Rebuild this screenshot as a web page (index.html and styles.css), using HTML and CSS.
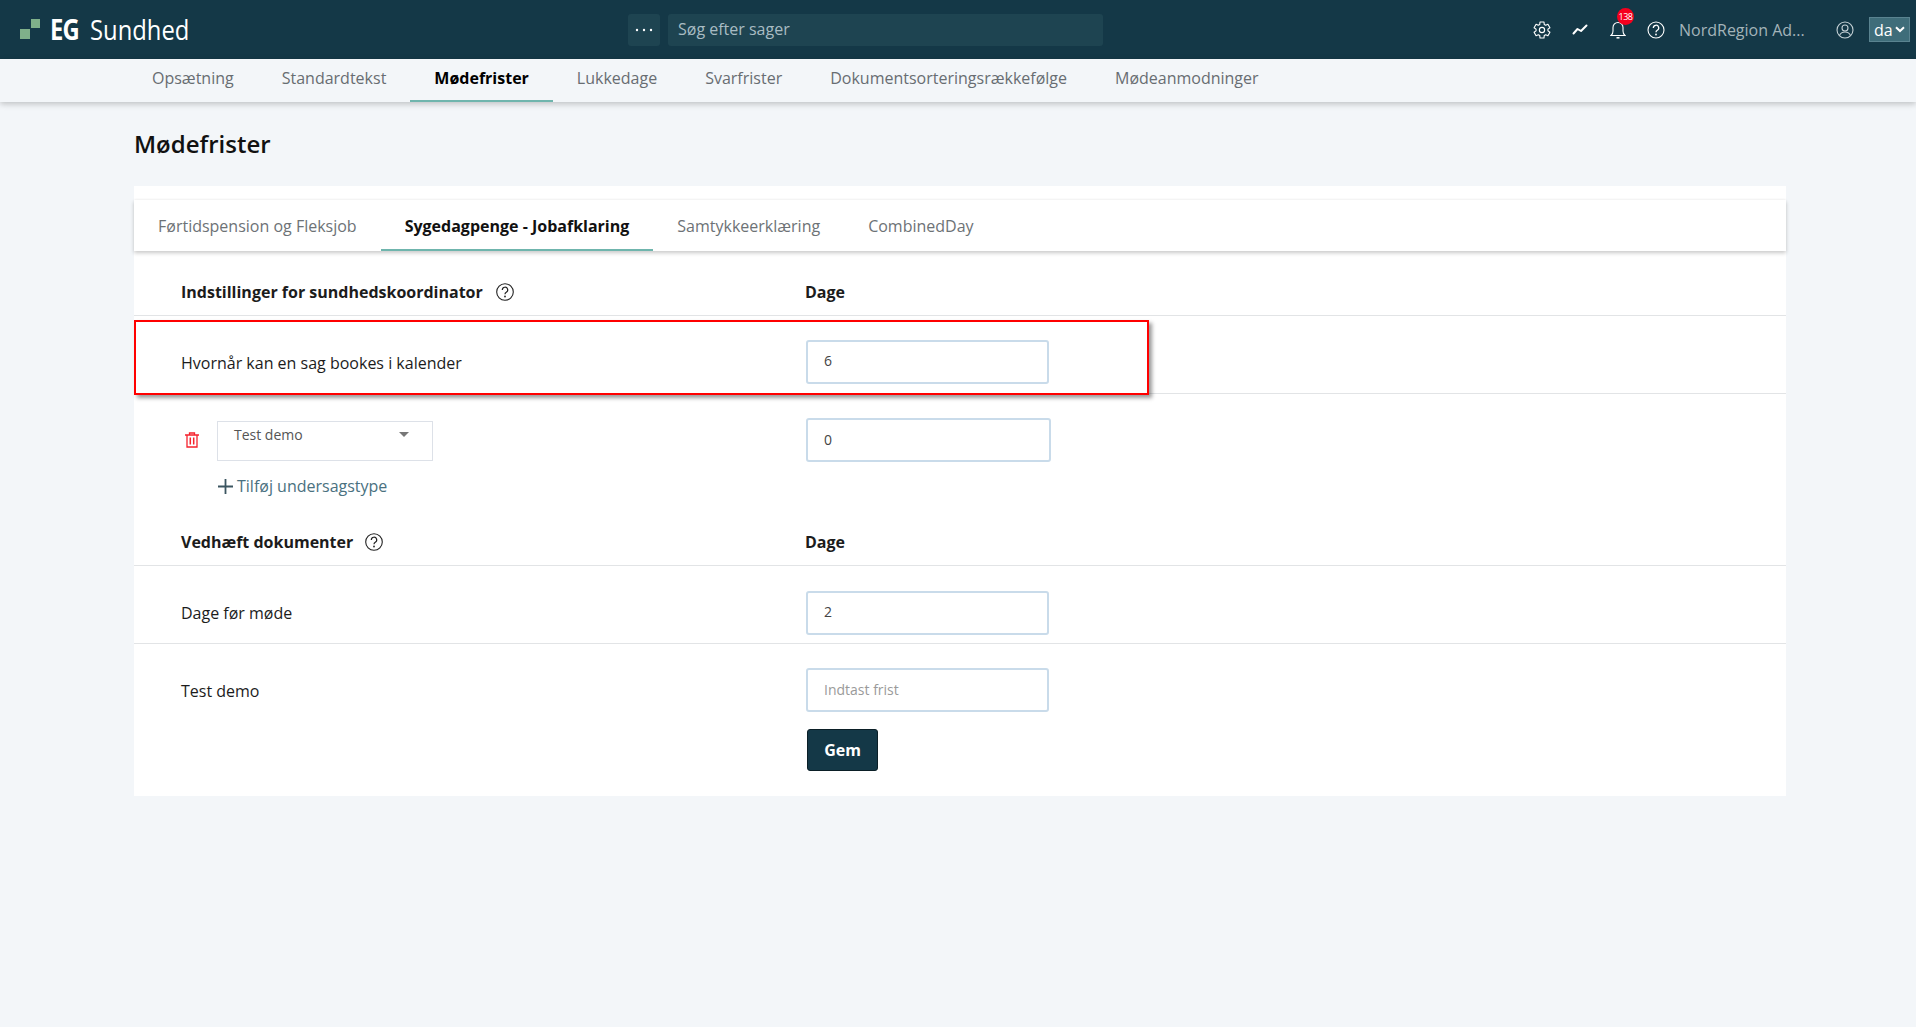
FILE: index.html
```html
<!DOCTYPE html>
<html lang="da">
<head>
<meta charset="utf-8">
<title>Mødefrister</title>
<link rel="stylesheet" href="styles.css">
</head>
<body>
<header class="topbar">
  <div class="brand">
    <svg class="brand-mark" width="20" height="20" viewBox="0 0 20 20"><rect x="0" y="10" width="10" height="10" fill="#7fb08a"/><rect x="11" y="0" width="9" height="9" fill="#7fb08a"/></svg>
    <span class="brand-eg">EG</span><span class="brand-name">Sundhed</span>
  </div>
  <div class="search-group">
    <button class="more-btn"><svg width="18" height="4" viewBox="0 0 18 4"><circle cx="2" cy="2" r="1.2" fill="#fff"/><circle cx="9" cy="2" r="1.2" fill="#fff"/><circle cx="16" cy="2" r="1.2" fill="#fff"/></svg></button>
    <div class="search-box">Søg efter sager</div>
  </div>
  <div class="top-actions">
    <svg class="icon-gear" width="18" height="18" viewBox="0 0 24 24" fill="none" stroke="#fff" stroke-width="1.500" stroke-linejoin="round"><path d="M9 4.580 9.340 1.330H14.660L15 4.580 16.930 5.700 19.910 4.360 22.570 8.970 19.920 10.890V13.110L22.570 15.030 19.910 19.640 16.930 18.300 15 19.420 14.660 22.670H9.340L9 19.420 7.070 18.300 4.090 19.640 1.430 15.030 4.080 13.110V10.890L1.430 8.970 4.090 4.360 7.070 5.700z"/><circle cx="12" cy="12" r="3.500"/></svg>
    <svg class="icon-trend" width="16" height="11" viewBox="0 0 16 11" fill="none" stroke="#fff" stroke-width="2" stroke-linejoin="round" stroke-linecap="round"><path d="M1.500 9.500 5.500 5 9 7 14.500 1.500"/></svg>
    <div class="bell-wrap">
      <svg width="16" height="18" viewBox="0 0 16 18" fill="none" stroke="#fff" stroke-width="1.100"><path d="M1 14.500h14c-1.500-1-2-2.500-2-4.500V6.500a5 5 0 0 0-10 0V10c0 2-.5 3.500-2 4.500z"/><path d="M6.500 16.800h3" stroke-width="1.500"/></svg>
      <span class="badge">138</span>
    </div>
    <svg class="icon-help" width="18" height="18" viewBox="0 0 18 18" fill="none" stroke="#fff" stroke-width="1.100"><circle cx="9" cy="9" r="8"/><path d="M6.300 6.900a2.700 2.700 0 1 1 4 2.400c-.9.500-1.300 1-1.300 2" stroke-width="1.300"/><circle cx="9" cy="13.500" r=".9" fill="#fff" stroke="none"/></svg>
    <span class="user-name">NordRegion Ad...</span>
    <svg class="icon-user" width="18" height="18" viewBox="0 0 18 18" fill="none" stroke="#c4d0d5" stroke-width="1.100"><circle cx="9" cy="9" r="8"/><circle cx="9" cy="7" r="3"/><path d="M3.500 14.500c1-2.500 3-3.500 5.500-3.500s4.500 1 5.500 3.500"/></svg>
    <div class="lang"><span>da</span><svg width="10" height="7" viewBox="0 0 10 7" fill="none" stroke="#fff" stroke-width="2"><path d="M1 1.200 5 5l4-3.800"/></svg></div>
  </div>
</header>

<nav class="subnav">
  <a class="subnav-item">Opsætning</a>
  <a class="subnav-item">Standardtekst</a>
  <a class="subnav-item is-active">Mødefrister</a>
  <a class="subnav-item">Lukkedage</a>
  <a class="subnav-item">Svarfrister</a>
  <a class="subnav-item">Dokumentsorteringsrækkefølge</a>
  <a class="subnav-item">Mødeanmodninger</a>
</nav>

<main class="page">
  <h1 class="page-title">Mødefrister</h1>
  <section class="card">
    <div class="tabs">
      <a class="tab">Førtidspension og Fleksjob</a>
      <a class="tab is-active">Sygedagpenge - Jobafklaring</a>
      <a class="tab">Samtykkeerklæring</a>
      <a class="tab">CombinedDay</a>
    </div>

    <div class="row row-head">
      <div class="col-label"><strong>Indstillinger for sundhedskoordinator</strong>
        <svg class="help help-first" width="18" height="18" viewBox="0 0 18 18" fill="none" stroke="#222" stroke-width="1.100"><circle cx="9" cy="9" r="8.300"/><path d="M6.300 6.900a2.700 2.700 0 1 1 4 2.400c-.9.500-1.300 1-1.300 2" stroke-width="1.200"/><circle cx="9" cy="13.500" r=".9" fill="#222" stroke="none"/></svg>
      </div>
      <strong class="col-value">Dage</strong>
    </div>

    <div class="row row-field row-first">
      <div class="col-label">Hvornår kan en sag bookes i kalender</div>
      <input class="field" value="6">
    </div>

    <div class="row-sub">
      <div class="sub-main">
        <div class="sub-left">
          <svg class="trash" width="14" height="16" viewBox="0 0 14 16" fill="none" stroke="#f5222d" stroke-width="1.300"><path d="M0 3h14M4.500 3V1h5v2"/><path d="M2 3v12h10V3"/><path d="M5.300 5.500v7M8.700 5.500v7" stroke-width="1.500"/></svg>
          <div class="select"><span>Test demo</span><i class="caret"></i></div>
        </div>
        <input class="field field-wide" value="0">
      </div>
      <a class="add-link"><svg width="15" height="15" viewBox="0 0 15 15" stroke="#3b5560" stroke-width="1.800"><path d="M7.500 0v15M0 7.500h15"/></svg>Tilføj undersagstype</a>
    </div>

    <div class="row row-head row-head-second">
      <div class="col-label"><strong>Vedhæft dokumenter</strong>
        <svg class="help" width="18" height="18" viewBox="0 0 18 18" fill="none" stroke="#222" stroke-width="1.100"><circle cx="9" cy="9" r="8.300"/><path d="M6.300 6.900a2.700 2.700 0 1 1 4 2.400c-.9.500-1.300 1-1.300 2" stroke-width="1.200"/><circle cx="9" cy="13.500" r=".9" fill="#222" stroke="none"/></svg>
      </div>
      <strong class="col-value">Dage</strong>
    </div>

    <div class="row row-field">
      <div class="col-label">Dage før møde</div>
      <input class="field" value="2">
    </div>

    <div class="row-last">
      <div class="col-label">Test demo</div>
      <div class="col-stack">
        <input class="field field-empty" placeholder="Indtast frist">
        <button class="save">Gem</button>
      </div>
    </div>

    <div class="highlight"></div>
  </section>
</main>
</body>
</html>
```

FILE: styles.css
```css
* { box-sizing: border-box; }
html, body { margin: 0; height: 100%; }
body {
  background: #f3f6f9;
  font-family: "Open Sans", "Noto Sans", sans-serif;
  font-size: 16px;
  color: #1c1c1c;
  overflow: hidden;
}

/* top bar */
.topbar {
  height: 59px;
  background: #143847;
  display: flex;
  align-items: center;
  position: relative;
  padding-left: 20px;
}
.brand { display: flex; align-items: center; width: 608px; color: #fff; }
.brand-mark { margin-right: 10px; margin-top: -1px; }
.brand-eg, .brand-name { display: inline-block; transform-origin: left center; transform: scaleX(.85); font-size: 28px; line-height: 34px; margin-bottom: 2px; }
.brand-eg { font-weight: 700; width: 40px; letter-spacing: -1px; }
.brand-name { font-weight: 400; }
.search-group { display: flex; gap: 8px; }
.more-btn {
  width: 32px; height: 32px; padding: 0; border: 0; border-radius: 3px;
  background: #1e4451; display: flex; align-items: center; justify-content: center;
}
.search-box {
  width: 435px; height: 32px; border-radius: 3px;
  background: #1e4451; color: #a9bcc3;
  padding-left: 10px; line-height: 31px; font-size: 16px;
}
.top-actions { display: flex; align-items: center; position: absolute; left: 1533px; top: 0; height: 59px; }
.icon-gear { margin-right: 21px; }
.icon-trend { margin-right: 22px; }
.bell-wrap { position: relative; width: 16px; height: 18px; margin-right: 21px; }
.bell-wrap svg { display: block; }
.badge {
  position: absolute; left: 7px; top: -13px;
  width: 17px; height: 17px; border-radius: 50%;
  background: #f5001e; color: #fff; font-size: 9px; line-height: 17px; text-align: center; letter-spacing: -.5px;
}
.icon-help { margin-right: 14px; }
.user-name { width: 157px; color: #a3b3b9; font-size: 16px; white-space: nowrap; }
.icon-user { margin-right: 15px; }
.lang {
  width: 41px; height: 25px; background: #3f6d7a; border: 1px solid #5a8390;
  color: #fff; display: flex; align-items: center; padding-left: 4px; gap: 2px; font-size: 16px;
}

/* sub navigation */
.subnav {
  height: 43px; background: #f3f6f9;
  display: flex; padding-left: 128px;
  box-shadow: 0 2px 6px rgba(0, 0, 0, .22);
  position: relative;
}
.subnav-item {
  padding: 0 24px; line-height: 38px; color: #686d72; font-size: 16px;
  border-bottom: 2px solid transparent; white-space: nowrap;
}
.subnav-item.is-active { color: #000; font-weight: 700; border-bottom-color: #6fb5ad; }

/* page */
.page { padding: 0 130px 0 134px; }
.page-title { margin: 0; padding-top: 25px; height: 84px; line-height: 34px; font-size: 24px; font-weight: 600; color: #111; }
.card { background: #fff; position: relative; height: 610px; }
.tabs {
  position: relative; top: 14px;
  height: 51px; background: #fff; display: flex;
  box-shadow: 0 2px 4px rgba(0, 0, 0, .22), 0 -1px 2px rgba(0, 0, 0, .03);
}
.tab { padding: 0 24px; line-height: 52px; height: 51px; color: #6d7276; font-size: 16px; border-bottom: 2px solid transparent; white-space: nowrap; }
.tab.is-active { color: #111; font-weight: 700; border-bottom-color: #6fb5ad; }

.row { display: flex; border-bottom: 1px solid #e2e4e6; padding-left: 47px; }
.col-label { width: 625px; flex: none; display: flex; align-items: center; }
.col-value { font-size: 16px; margin-left: -1px; }
.row-head { height: 65px; margin-top: 14px; padding-top: 18px; align-items: center; }
.row-head strong { font-weight: 700; }
.help { margin-left: 12px; }
.help-first { margin-left: 13px; }
.row-field { height: 78px; padding-top: 25px; }
.row-field .col-label { height: 44px; }
.row-first { padding-top: 24px; }
.row-first .col-label { height: 46px; }
.field {
  display: block; width: 243px; height: 44px; border: 2px solid #c9dbea; border-radius: 3px;
  padding: 0 16px 3px; font: 14px "Open Sans", sans-serif; color: #444; background: #fff; outline: 0; margin: 0;
}
.field-wide { width: 245px; padding-bottom: 2px; }
.field-empty { padding-bottom: 1px; }
.field::placeholder { color: #9a9a9a; opacity: 1; }

.row-sub { padding: 24px 0 0 47px; height: 120px; }
.sub-main { display: flex; }
.sub-left { width: 625px; flex: none; display: flex; align-items: flex-start; }
.trash { margin: 14px 18px 0 4px; }
.select {
  margin-top: 3px; width: 216px; height: 40px; border: 1px solid #dde1e8; position: relative;
  padding: 3px 16px; font-size: 14px; color: #555;
}
.caret {
  position: absolute; right: 23px; top: 10px; width: 0; height: 0;
  border-left: 5px solid transparent; border-right: 5px solid transparent; border-top: 5px solid #777;
}
.add-link { display: flex; align-items: center; gap: 4px; margin: 12px 0 0 37px; font-size: 16px; color: #4a7180; line-height: 24px; }
.row-head-second { height: 52px; margin-top: 0; padding-top: 5px; }
.row-last { display: flex; padding: 24px 0 0 47px; }
.row-last .col-label { height: 44px; padding-top: 2px; }
.col-stack { display: flex; flex-direction: column; align-items: flex-start; }
.save {
  margin: 17px 0 0 1px; width: 71px; height: 42px; background: #143847; color: #fff; border: 1px solid #0b1f27;
  border-radius: 3px; font: 700 16px "Open Sans", sans-serif; padding: 0;
}

/* annotation drawn over the form */
.highlight {
  position: absolute; left: 0; top: 134px; width: 1015px; height: 75px;
  border: 2px solid #f00; box-shadow: 3px 3px 4px rgba(0, 0, 0, .4);
  pointer-events: none;
}
```
